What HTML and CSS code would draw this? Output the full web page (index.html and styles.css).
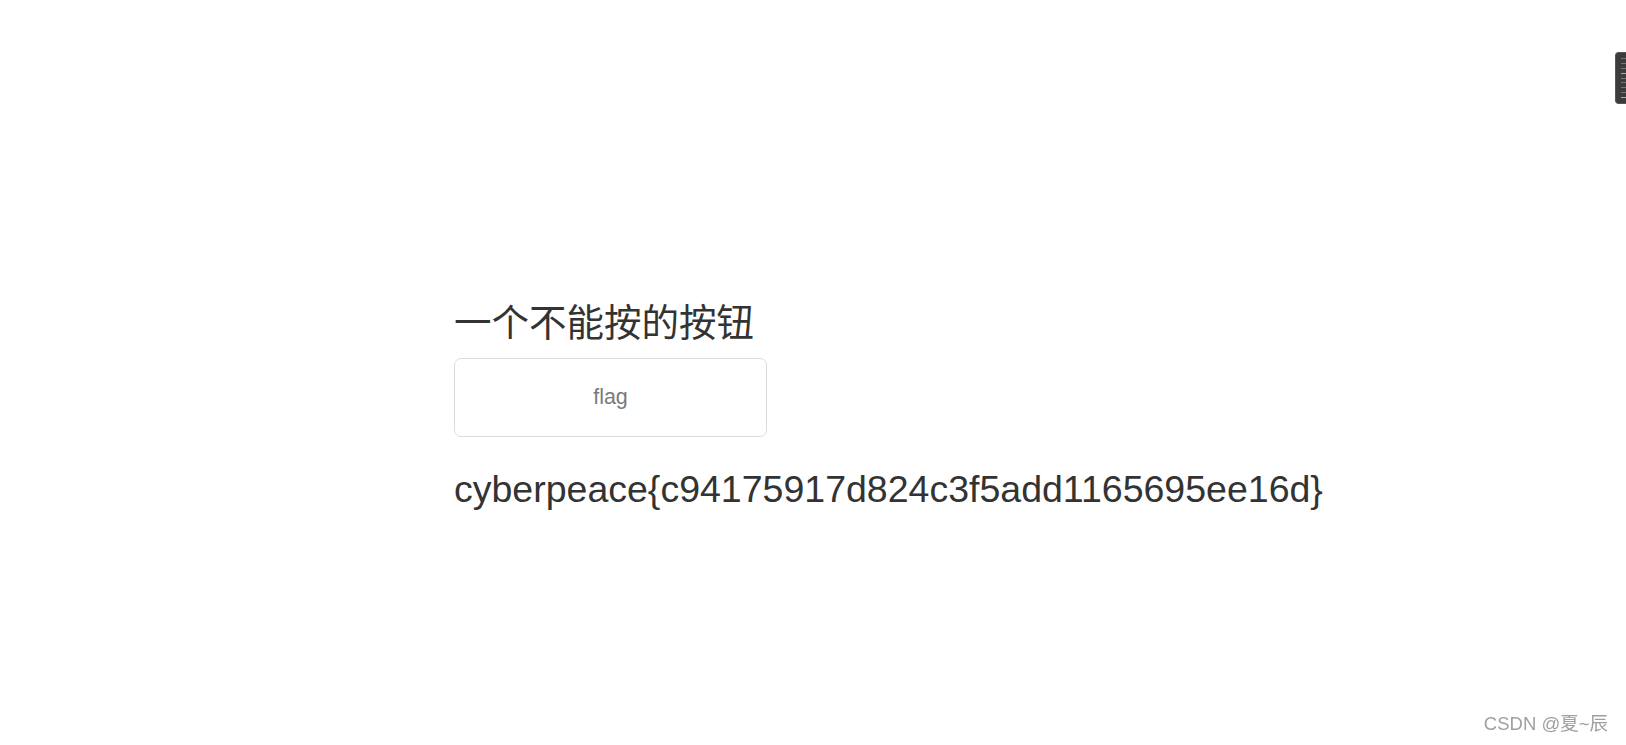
FILE: index.html
```html
<!DOCTYPE html>
<html lang="zh-CN">
<head>
    <meta charset="UTF-8">
    <meta name="viewport" content="width=device-width, initial-scale=1.0">
    <title>一个不能按的按钮</title>
    <link rel="stylesheet" href="styles.css">
</head>
<body>
    <div class="container">
        <h3>一个不能按的按钮</h3>
        <form>
            <input type="submit" class="btn" name="auth" value="flag">
        </form>
        <h3 class="flag">cyberpeace{c94175917d824c3f5add1165695ee16d}</h3>
    </div>

    <div class="side-widget">
        <span class="bar"></span>
        <span class="bar"></span>
        <span class="bar"></span>
        <span class="bar orange"></span>
        <span class="bar"></span>
        <span class="bar"></span>
        <span class="bar"></span>
        <span class="bar"></span>
        <span class="bar green"></span>
    </div>

    <div class="watermark">CSDN @夏~辰</div>
</body>
</html>
```
FILE: styles.css
```css
body {
    font-family: "Liberation Sans", Arial, "Noto Sans CJK SC", sans-serif;
    color: #333;
    background-color: #fff;
    margin: 0;
}
.container {
    width: 718px;
    margin: 0 auto;
    padding-top: 303px;
}
h3 {
    font-size: 37.5px;
    font-weight: normal;
    line-height: 1.1;
    margin: 0 0 14px 0;
    white-space: nowrap;
}
.btn {
    width: 313px;
    height: 79px;
    font-family: "Liberation Sans", Arial, sans-serif;
    font-size: 21.5px;
    color: #7a7a7a;
    background-color: #fff;
    border: 1px solid #dcdcdc;
    border-radius: 7px;
    cursor: not-allowed;
}
.flag {
    margin-top: 32px;
}
.side-widget {
    position: fixed;
    top: 52px;
    right: 0;
    width: 11px;
    height: 52px;
    background-color: #3c3c3c;
    border: 1px solid #555;
    border-right: none;
    border-radius: 4px 0 0 4px;
    display: flex;
    flex-direction: column;
    align-items: flex-end;
    gap: 2px;
    padding: 4px 0;
    box-sizing: border-box;
}
.bar {
    display: block;
    width: 5px;
    height: 1px;
    background-color: #777;
    margin: 1px 0;
}
.bar.orange {
    background-color: #e8a030;
}
.bar.green {
    background-color: #7ee020;
}
.watermark {
    position: fixed;
    right: 18px;
    bottom: 10px;
    font-size: 18.5px;
    color: #a0a0a0;
    font-family: "Liberation Sans", Arial, "Noto Sans CJK SC", sans-serif;
}
```
